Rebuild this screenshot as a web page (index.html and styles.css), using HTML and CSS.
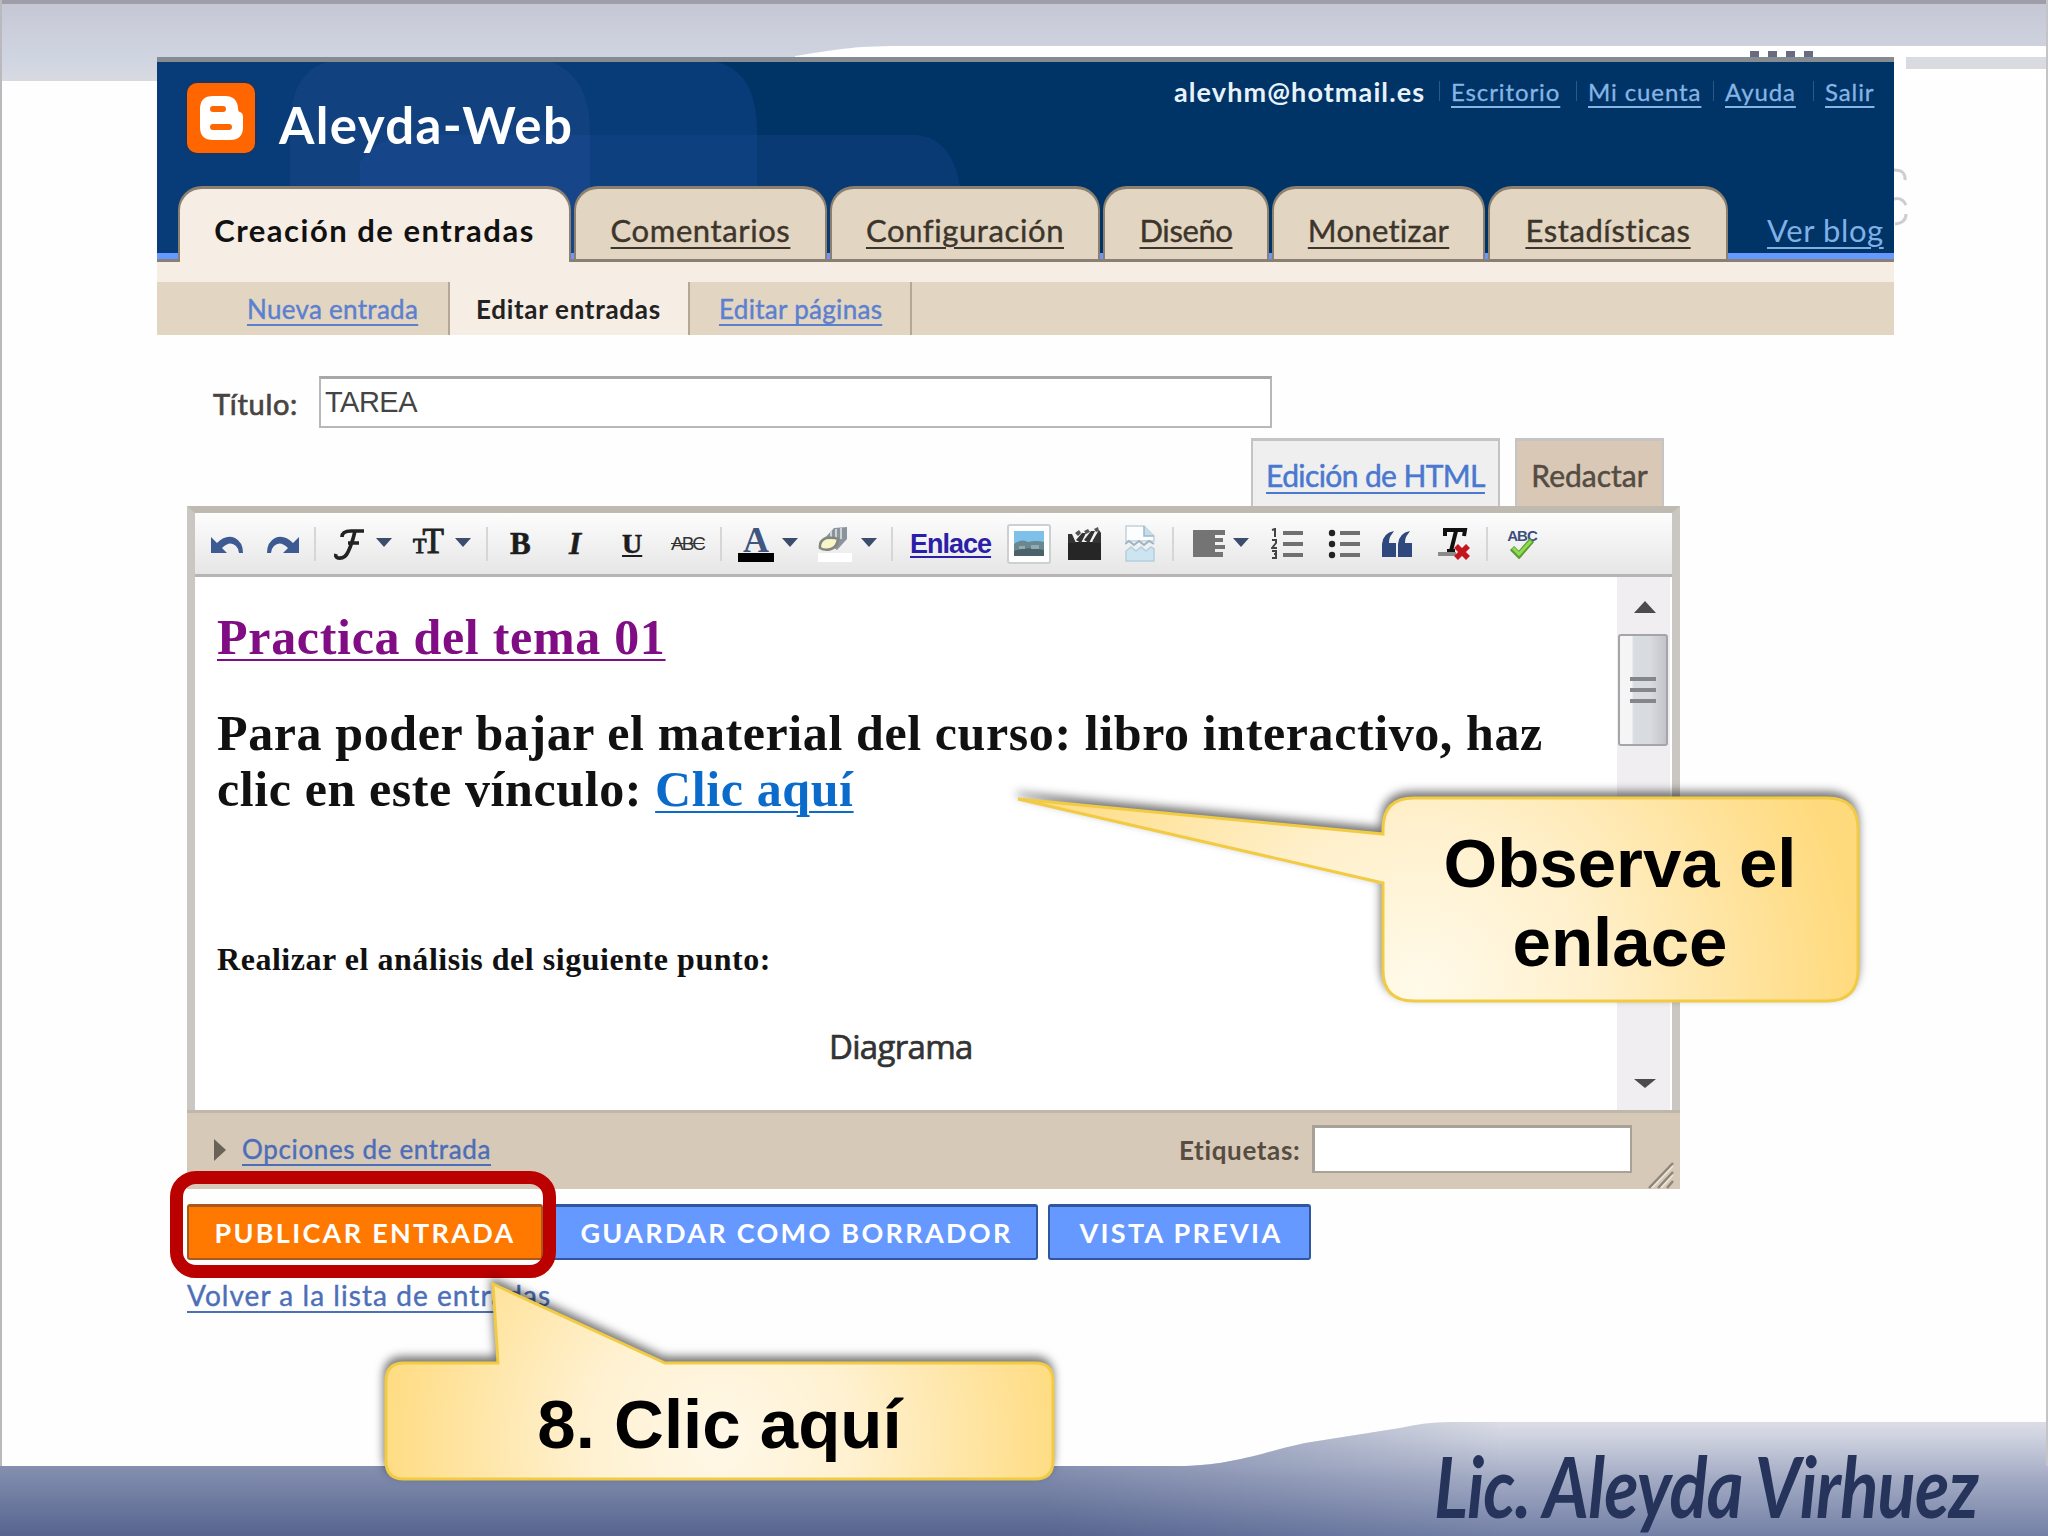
FILE: index.html
```html
<!DOCTYPE html>
<html lang="es">
<head>
  <meta charset="utf-8">
  <title>Aleyda-Web</title>
  <link rel="stylesheet" href="styles.css">
</head>
<body>
  <!-- slide background -->
  <svg class="backdrop" width="2048" height="1536" viewBox="0 0 2048 1536">
    <defs>
      <linearGradient id="sky" x1="0" y1="0" x2="0" y2="1">
        <stop offset="0" stop-color="#c6c6d3"/>
        <stop offset="0.75" stop-color="#d0d5e2"/>
        <stop offset="1" stop-color="#d8dae0"/>
      </linearGradient>
      <linearGradient id="sea" x1="0" y1="1466" x2="0" y2="1536" gradientUnits="userSpaceOnUse">
        <stop offset="0" stop-color="#8590b0"/>
        <stop offset="1" stop-color="#56648f"/>
      </linearGradient>
      <linearGradient id="wave" x1="0" y1="1420" x2="0" y2="1536" gradientUnits="userSpaceOnUse">
        <stop offset="0" stop-color="#dcdee6"/>
        <stop offset="0.15" stop-color="#ced2df"/>
        <stop offset="0.5" stop-color="#a3abc4"/>
        <stop offset="1" stop-color="#7380a6"/>
      </linearGradient>
      <linearGradient id="fade" x1="1050" y1="0" x2="1500" y2="0" gradientUnits="userSpaceOnUse">
        <stop offset="0" stop-color="#fff"/>
        <stop offset="1" stop-color="#000"/>
      </linearGradient>
      <mask id="seaMask"><rect y="1400" width="2048" height="136" fill="url(#fade)"/></mask>
    </defs>
    <rect width="2048" height="81" fill="url(#sky)"/>
    <path d="M795 56C835 50 850 46 900 46H2048V81H795Z" fill="#fff"/>
    <rect x="1906" y="57" width="142" height="12" fill="#d9dbe0"/>
    <g fill="#696b81">
      <rect x="1750" y="51" width="9" height="8"/><rect x="1768" y="51" width="9" height="8"/>
      <rect x="1786" y="51" width="9" height="8"/><rect x="1804" y="51" width="9" height="8"/>
    </g>
    <path d="M1894 170q12 0 11 10M1894 199q8-2 12 6M1906 214q0 9-11 10" fill="none" stroke="#cdcdd4" stroke-width="3"/>
    <path d="M0 1466H1185C1235 1464 1260 1453 1305 1443L1400 1428Q1425 1422 1450 1422H2048V1536H0Z" fill="url(#wave)"/>
    <path d="M0 1466H1185C1235 1464 1260 1453 1305 1443L1400 1428Q1425 1422 1450 1422H2048V1536H0Z" fill="url(#sea)" mask="url(#seaMask)"/>
    <rect width="2048" height="4" fill="#9f9da8"/>
    <rect width="2" height="1466" fill="#b9b9be"/>
    <rect x="2046" width="2" height="1466" fill="#c4c4c8"/>
  </svg>

  <div class="window">
    <header>
      <svg class="shapes" width="1737" height="194" viewBox="0 0 1737 194">
        <path d="M0 0H560Q600 10 600 70V194H0Z" fill="#083c78"/>
        <path d="M133 194V60Q135 10 170 0H395Q433 15 433 70V194Z" fill="#11427f"/>
        <path d="M203 194V100Q220 73 260 73H433V194Z" fill="#17458a"/>
        <path d="M433 73H760Q804 78 805 150V194H433Z" fill="#16478a" opacity=".4"/>
      </svg>
      <div class="top">
        <div class="logo">
          <svg width="44" height="46" viewBox="0 0 44 46">
            <path d="M14 1h12q12 0 13 12 0 4 2 4 3 1 3 5v10q0 13-13 13H14Q1 45 1 32V14Q1 1 14 1Z" fill="#fff"/>
            <path d="M14 14h10M14 32h16" stroke="#ff6600" stroke-width="6" stroke-linecap="round"/>
          </svg>
        </div>
        <h1>Aleyda-Web</h1>
        <div class="account">
          <b>alevhm@hotmail.es</b>
          <a class="a1">Escritorio</a>
          <a class="a2">Mi cuenta</a>
          <a class="a3">Ayuda</a>
          <a class="a4">Salir</a>
        </div>
      </div>
      <nav class="tabs">
        <div class="tab active">Creación de entradas</div>
        <div class="tab comments"><a>Comentarios</a></div>
        <div class="tab config"><a>Configuración</a></div>
        <div class="tab design"><a>Diseño</a></div>
        <div class="tab money"><a>Monetizar</a></div>
        <div class="tab stats"><a>Estadísticas</a></div>
        <a class="view">Ver blog</a>
      </nav>
    </header>
    <nav class="subnav">
      <div class="sub new"><a>Nueva entrada</a></div>
      <div class="sub current">Editar entradas</div>
      <div class="sub pages"><a>Editar páginas</a></div>
    </nav>

    <main>
      <div class="title-row">
        <label>Título:</label>
        <div class="title-input">TAREA</div>
      </div>
      <div class="modes">
        <div class="mode html"><a>Edición de HTML</a></div>
        <div class="mode compose">Redactar</div>
      </div>

      <div class="editor">
        <div class="toolbar">
          <svg width="32" height="18" viewBox="0 0 32 18"><path d="M0 2v16h16l-5-5q8-8 14-2 3 3 3 7h4Q32 7 24 3 15-1 6 8Z" fill="#3d5a93"/></svg>
          <svg width="32" height="18" viewBox="0 0 32 18"><path d="M32 2v16H16l5-5q-8-8-14-2-3 3-3 7H0Q0 7 8 3q9-4 18 5Z" fill="#3d5a93"/></svg>
          <i class="sep"></i>
          <svg width="32" height="32" viewBox="0 0 32 32"><path d="M30 3H17Q8 3 8 9M21 3Q18 16 14 24 11 31 4 30 1 29 2 26M14 15H25" fill="none" stroke="#222" stroke-width="3.6"/></svg>
          <i class="arrow"></i>
          <span class="size"><small>T</small>T</span>
          <i class="arrow"></i>
          <i class="sep"></i>
          <span class="glyph bold">B</span>
          <span class="glyph italic">I</span>
          <span class="glyph under">U</span>
          <span class="strike">ABC</span>
          <i class="sep"></i>
          <span class="color">A</span>
          <i class="arrow"></i>
          <svg width="34" height="36" viewBox="0 0 34 36"><rect y="27" width="34" height="9" fill="#fff"/><path d="M5 14 16 2 29 1V13L19 24Z" fill="#8b949c"/><path d="M13 5v12M18 3v13M23 2v11" stroke="#cdd3d6" stroke-width="2"/><path d="M2 22Q1 15 8 12q8-1 12 1-1 8-7 10-6 2-11-1Z" fill="#f6f6c8" stroke="#858580" stroke-width="2.5"/></svg>
          <i class="arrow"></i>
          <i class="sep"></i>
          <a class="link">Enlace</a>
          <svg width="44" height="40" viewBox="0 0 44 40"><rect x="1" y="1" width="42" height="38" rx="2" fill="#fff" stroke="#ccd0d3" stroke-width="2"/><rect x="7" y="7" width="30" height="25" fill="#7dc0ea"/><path d="M7 20q8-6 14-2 8-2 16 0v14H7Z" fill="#6b8790"/><path d="M7 27q14-5 30-1v6H7Z" fill="#4c626b"/><path d="M12 22h6v3h-6Zm12-1h8v4h-8Z" fill="#93abb0"/></svg>
          <svg width="34" height="34" viewBox="0 0 34 34"><path d="M1 15h33v18H1Z" fill="#262626"/><path d="M1 7h4l4 9H1ZM9 13l6-7h4l-5 10ZM17 13l7-9h4l-6 12ZM26 13l6-10 2 3v10h-9Z" fill="#333"/><path d="M8 6l4-3 2 3-3 3ZM17 4l4-2 2 3-4 2ZM27 2l4-2 1 4-3 1Z" fill="#555"/></svg>
          <svg width="30" height="37" viewBox="0 0 30 37"><path d="M1 1h18l10 10v5H1Z" fill="#fbfdff" stroke="#c4d1dc" stroke-width="1.5"/><path d="M19 1v10h10" fill="#c5dcec" stroke="#9fb9cd" stroke-width="1.5"/><path d="M1 26l5-4 5 4 5-4 5 4 5-4 3 2v12H1Z" fill="#cde5f0" stroke="#b4cfdd" stroke-width="1.5"/><path d="M0 19l4-3 5 4 5-4 5 4 5-4 5 3" fill="none" stroke="#9fb4c3" stroke-width="2"/></svg>
          <i class="sep"></i>
          <svg width="32" height="27" viewBox="0 0 32 27"><path d="M0 0H32V5H22V8H30V12H22V15H32V19H22V22H30V27H0Z" fill="#747474"/></svg>
          <i class="arrow"></i>
          <svg width="32" height="32" viewBox="0 0 32 32"><path d="M12 5H32M12 16H32M12 27H32" stroke="#707070" stroke-width="4"/><path d="M1 2l3-1v8M1 12h4v3l-4 5h5M1 23h4v3H3h2v4H1" fill="none" stroke="#444" stroke-width="2"/></svg>
          <svg width="32" height="32" viewBox="0 0 32 32"><path d="M12 5H32M12 16H32M12 27H32" stroke="#707070" stroke-width="4"/><circle cx="4" cy="5" r="3.2" fill="#222"/><circle cx="4" cy="16" r="3.2" fill="#222"/><circle cx="4" cy="27" r="3.2" fill="#222"/></svg>
          <svg width="30" height="27" viewBox="0 0 30 27"><path d="M0 27V14Q1 3 12 1L10 4Q7 7 7 13H14V27Z" fill="#2f487d"/><path d="M16 27V14Q17 3 28 1L26 4Q23 7 23 13H30V27Z" fill="#2f487d"/></svg>
          <svg width="32" height="32" viewBox="0 0 32 32"><path d="M7 8V2H27L26 8M18 3 13 23M9 23H17" fill="none" stroke="#111" stroke-width="4"/><path d="M0 26H18" stroke="#8b8b8b" stroke-width="4"/><path d="M18 18 30 30M30 18 18 30" stroke="#c4141c" stroke-width="5.5"/></svg>
          <i class="sep"></i>
          <span class="spell">ABC<svg width="24" height="20" viewBox="0 0 24 20"><path d="M2 9 9 16 22 1" fill="none" stroke="#5d9b38" stroke-width="6"/><path d="M3 9 9 15 21 2" fill="none" stroke="#8fdc4c" stroke-width="3"/></svg></span>
        </div>

        <div class="document">
          <div class="text">
            <p class="practice"><a>Practica del tema 01</a></p>
            <p class="material">Para poder bajar el material del curso: libro interactivo, haz<br>clic en este vínculo: <a>Clic aquí</a></p>
            <p class="task">Realizar el análisis del siguiente punto:</p>
            <p class="diagram">Diagrama</p>
          </div>
          <div class="scrollbar">
            <i class="up"></i>
            <div class="thumb"><i></i><i></i><i></i></div>
            <i class="down"></i>
          </div>
        </div>

        <div class="footer">
          <i class="more"></i>
          <a class="options">Opciones de entrada</a>
          <label>Etiquetas:</label>
          <div class="labels"></div>
          <svg class="grip" width="26" height="28" viewBox="0 0 26 28"><path d="M1 27 25 2M10 27 25 11M19 27 25 20" stroke="#8d867c" stroke-width="2.5"/><path d="M4 27 25 5M13 27 25 14" stroke="#efe6da" stroke-width="1.5"/></svg>
        </div>
      </div>

      <div class="actions">
        <div class="button publish">PUBLICAR ENTRADA</div>
        <div class="button draft">GUARDAR COMO BORRADOR</div>
        <div class="button preview">VISTA PREVIA</div>
      </div>
      <a class="back">Volver a la lista de entradas</a>
    </main>
  </div>

  <!-- annotations over the window -->
  <div class="highlight"></div>

  <div class="callout observe">
    <svg width="900" height="240" viewBox="1000 780 900 240">
      <defs>
        <radialGradient id="g1" cx="1420" cy="990" r="440" gradientUnits="userSpaceOnUse">
          <stop offset="0" stop-color="#fffaea"/>
          <stop offset="0.4" stop-color="#fff0cb"/>
          <stop offset="1" stop-color="#ffda7c"/>
        </radialGradient>
      </defs>
      <path d="M1018 799 1383 834V829Q1383 798 1414 798H1827Q1858 798 1858 829V970Q1858 1001 1827 1001H1414Q1383 1001 1383 970V883Z" fill="url(#g1)" stroke="#f2cb45" stroke-width="3"/>
    </svg>
    <p>Observa el<br>enlace</p>
  </div>

  <div class="callout click">
    <svg width="700" height="230" viewBox="370 1270 700 230">
      <defs>
        <radialGradient id="g2" cx="720" cy="1440" r="340" gradientUnits="userSpaceOnUse">
          <stop offset="0" stop-color="#fff8e8"/>
          <stop offset="0.4" stop-color="#fff1d0"/>
          <stop offset="1" stop-color="#ffdc82"/>
        </radialGradient>
      </defs>
      <path d="M493 1284 665 1363H1035Q1053 1363 1053 1381V1461Q1053 1479 1035 1479H404Q386 1479 386 1461V1381Q386 1363 404 1363H498Z" fill="url(#g2)" stroke="#f2cb45" stroke-width="3"/>
    </svg>
    <p>8. Clic aquí</p>
  </div>

  <div class="signature">Lic. Aleyda Virhuez</div>
</body>
</html>
```

FILE: styles.css
```css
* {
  box-sizing: border-box;
}

body {
  position: relative;
  width: 2048px;
  height: 1536px;
  margin: 0;
  overflow: hidden;
  background-color: #fefefe;
  font-family: Lato, "Liberation Sans", sans-serif;
}

h1, p {
  margin: 0;
}

a {
  text-decoration: underline;
  text-decoration-thickness: 2px;
  text-underline-offset: 5px;
}

.backdrop {
  position: absolute;
  top: 0;
  left: 0;
}

.window {
  position: relative;
  width: 1737px;
  margin-left: 157px;
  padding-top: 57px;
}

/* header */
header {
  position: relative;
  height: 205px;
  background-color: #003366;
  border-top: 5px solid #858b90;
  border-bottom: 3px solid #8a7f74;
}

.shapes {
  position: absolute;
  top: 0;
  left: 0;
}

.top {
  position: relative;
  display: flex;
  height: 124px;
  padding-left: 30px;
}

.logo {
  display: flex;
  align-items: center;
  justify-content: center;
  width: 68px;
  height: 70px;
  margin-top: 21px;
  background-color: #ff6600;
  border-radius: 10px;
  box-shadow: 0 0 3px #402a3a;
}

h1 {
  width: 300px;
  margin: 33px 0 0 24px;
  color: #fff;
  font-size: 51px;
  font-weight: 700;
  line-height: 60px;
  letter-spacing: 1.4px;
  white-space: nowrap;
}

.account {
  display: flex;
  margin-left: 595px;
  font-size: 24px;
  line-height: 60px;
  letter-spacing: 0.9px;
  white-space: nowrap;
  -webkit-text-stroke: 0.3px;
}

.account b {
  width: 267px;
  color: #e8f2fa;
  font-size: 27px;
  letter-spacing: 1.1px;
  -webkit-text-stroke: 0;
}

.account a {
  color: #86b4e4;
  padding-left: 10px;
}

.account a::before {
  content: "";
  display: inline-block;
  width: 1px;
  height: 20px;
  margin-right: 11px;
  margin-left: -12px;
  background-color: #2c5a88;
}

.a1 { width: 137px; }
.a2 { width: 137px; }
.a3 { width: 100px; }

.tabs {
  position: relative;
  display: flex;
  gap: 3px;
  height: 73px;
  padding-left: 21px;
  background: linear-gradient(#6699ff, #6699ff) bottom / 100% 6px no-repeat;
}

.tab {
  height: 73px;
  padding-top: 21px;
  background-color: #e2d5c1;
  border: 3px solid #8d806f;
  border-width: 3px 2px 0;
  border-radius: 24px 24px 0 0;
  color: #3d352c;
  font-size: 31px;
  line-height: 40px;
  letter-spacing: 0.6px;
  text-align: center;
  white-space: nowrap;
  -webkit-text-stroke: 0.4px;
}

.tab.active {
  width: 393px;
  height: 76px;
  background-color: #f6ede4;
  color: #111;
  font-weight: 700;
  letter-spacing: 1.5px;
  -webkit-text-stroke: 0;
}

.comments { width: 253px; }
.config { width: 270px; }
.tab.design { width: 166px; letter-spacing: -0.4px; }
.tab.money { width: 213px; letter-spacing: 0.3px; }
.stats { width: 240px; }

.view {
  margin-left: 36px;
  padding-top: 24px;
  height: 66px;
  color: #7fb0e6;
  font-size: 31px;
  line-height: 40px;
  letter-spacing: 0.6px;
  white-space: nowrap;
}

.subnav {
  display: flex;
  height: 73px;
  background: linear-gradient(#f6ede4 20px, #e2d5c1 20px);
  font-size: 26px;
  line-height: 53px;
  letter-spacing: 0.3px;
}

.sub {
  height: 53px;
  margin-top: 20px;
  padding-top: 1px;
  border-right: 2px solid #b5a795;
  white-space: nowrap;
}

.sub a {
  color: #5b80cf;
  -webkit-text-stroke: 0.4px;
}

.new {
  width: 293px;
  padding-left: 90px;
}

.current {
  width: 240px;
  padding-left: 26px;
  background-color: #f6ede4;
  color: #222;
  font-weight: 700;
  letter-spacing: 0.7px;
}

.pages {
  width: 222px;
  padding-left: 29px;
}

/* post form */
main {
  padding: 41px 0 0 30px;
}

.title-row {
  display: flex;
}

.title-row label {
  width: 132px;
  padding: 7px 0 0 26px;
  color: #4a4440;
  font-size: 29px;
  line-height: 42px;
  letter-spacing: 0.7px;
  -webkit-text-stroke: 0.7px;
}

.title-input {
  width: 953px;
  height: 52px;
  padding-left: 4px;
  background-color: #fff;
  border: 2px solid #b9b7b8;
  border-top: 3px solid #aaa7a9;
  color: #444;
  font: 29px/46px "Liberation Sans", sans-serif;
  letter-spacing: -0.5px;
}

.modes {
  display: flex;
  gap: 15px;
  height: 78px;
  padding: 10px 0 0 1064px;
  font-size: 30px;
  line-height: 68px;
  text-align: center;
}

.mode {
  border: 2px solid #c5c3c3;
  border-top-width: 3px;
  border-bottom: 0;
  white-space: nowrap;
  -webkit-text-stroke: 0.5px;
}

.html {
  width: 249px;
  background-color: #efefef;
  letter-spacing: -0.6px;
}

.html a {
  color: #4a78cf;
}

.compose {
  width: 149px;
  background-color: #d8c8b5;
  color: #544b43;
}

.editor {
  width: 1493px;
  height: 683px;
  border: 8px solid #cac6c1;
  border-top: 7px solid #bfbab0;
  border-bottom: 0;
}

.toolbar {
  display: grid;
  grid-template-columns: 56px 47px 20px 42px 37px 42px 31px 24px 56px 56px 49px 49px 18px 44px 36px 43px 30px 19px 97px 60px 58px 47px 21px 40px 38px 57px 54px 56px 48px 21px 40px;
  align-items: center;
  height: 64px;
  padding-left: 16px;
  background: linear-gradient(#fdfdfd, #e7e6e7);
  border-bottom: 3px solid #b7b4b5;
  font-family: "Liberation Serif", serif;
}

.sep {
  width: 2px;
  height: 34px;
  background-color: #d6d6d8;
}

.arrow {
  border: 8px solid transparent;
  border-top: 9px solid #3b4c6c;
  border-bottom: 0;
  width: 0;
  margin-top: -3px;
}

.size {
  display: flex;
  align-items: baseline;
  font-size: 35px;
  line-height: 36px;
  color: #222;
  -webkit-text-stroke: 1px #222;
}

.size small {
  margin-right: -4px;
  font-size: 22px;
}

.glyph {
  font-size: 31px;
  font-weight: 700;
  line-height: 36px;
  color: #1c1c1c;
  -webkit-text-stroke: 0.6px;
}

.italic {
  padding-left: 3px;
  font-style: italic;
}

.under {
  font-size: 28px;
  text-decoration: underline;
}

.strike {
  font: 19px/30px "Liberation Sans", sans-serif;
  letter-spacing: -2px;
  color: #333;
  text-decoration: line-through;
}

.color {
  width: 36px;
  height: 36px;
  border-bottom: 9px solid #000;
  color: #40557f;
  font-size: 36px;
  font-weight: 700;
  line-height: 29px;
  text-align: center;
}

.link {
  color: #2a20a8;
  font: 700 27px/34px "Liberation Sans", sans-serif;
  letter-spacing: -1px;
  text-underline-offset: 3px;
}

.spell {
  display: flex;
  flex-direction: column;
  align-items: center;
  width: 30px;
  color: #3c4f7d;
  font: 700 15px/14px "Liberation Sans", sans-serif;
  letter-spacing: -1px;
}

.spell svg {
  margin-top: -4px;
}

.document {
  display: flex;
  height: 533px;
  background-color: #fff;
  font-family: "Liberation Serif", serif;
  font-weight: 700;
}

.text {
  width: 1422px;
  padding: 32px 0 0 22px;
  color: #111;
  white-space: nowrap;
}

.practice {
  font-size: 50px;
  line-height: 56px;
  letter-spacing: 0.7px;
}

.practice a {
  color: #800d83;
}

.material {
  margin-top: 40px;
  font-size: 50px;
  line-height: 56px;
  letter-spacing: 0.6px;
}

.material a {
  color: #0b6bcb;
}

.task {
  margin-top: 122px;
  font-size: 32px;
  line-height: 40px;
  letter-spacing: 0.54px;
}

.diagram {
  margin-top: 48px;
  padding-left: 612px;
  color: #333;
  font: 33px/40px "Open Sans", sans-serif;
  letter-spacing: -0.7px;
  -webkit-text-stroke: 0.7px;
}

.scrollbar {
  display: flex;
  flex-direction: column;
  align-items: center;
  width: 53px;
  padding: 24px 2px 22px 0;
  background-color: #f0eef0;
}

.up, .down {
  margin-left: 4px;
  border: 11px solid transparent;
}

.up {
  border-top: 0;
  border-bottom: 12px solid #4b4b4b;
}

.down {
  margin-top: auto;
  border-top: 9px solid #4b4b4b;
  border-bottom: 0;
}

.thumb {
  display: flex;
  flex-direction: column;
  align-items: center;
  justify-content: center;
  gap: 7px;
  width: 50px;
  height: 112px;
  margin-top: 21px;
  background: linear-gradient(90deg, #f5f5f6 25%, #d7dde0 30%, #d9dbe0 65%, #c3c4ca);
  border: 2px solid #a5a4a8;
  border-radius: 3px;
}

.thumb i {
  width: 26px;
  height: 4px;
  background-color: #85868c;
}

.footer {
  display: flex;
  height: 79px;
  margin: 0 -8px;
  padding-left: 27px;
  background-color: #d7c9b7;
  border-top: 3px solid #bfb6ac;
}

.more {
  height: 0;
  margin-top: 26px;
  border: 11px solid transparent;
  border-left: 12px solid #6b6257;
  border-right: 0;
}

.options {
  width: 953px;
  padding-left: 16px;
  color: #4c6db8;
  font-size: 26px;
  line-height: 72px;
  letter-spacing: 0.65px;
  -webkit-text-stroke: 0.4px;
}

.footer label {
  width: 133px;
  color: #574c41;
  font-size: 26px;
  font-weight: 700;
  line-height: 74px;
  letter-spacing: 0.65px;
  white-space: nowrap;
}

.labels {
  width: 320px;
  height: 48px;
  margin-top: 12px;
  background-color: #fff;
  border: 3px solid #aaa196;
  border-width: 3px 2px 2px 3px;
}

.grip {
  align-self: flex-end;
  margin-left: 16px;
}

/* bottom buttons */
.actions {
  display: flex;
  margin-top: 15px;
}

.button {
  height: 56px;
  background-color: #6699ff;
  border: 2px solid #2f569f;
  border-top-width: 3px;
  border-radius: 3px;
  color: #fff;
  font-size: 27px;
  font-weight: 700;
  line-height: 51px;
  letter-spacing: 2.3px;
  text-align: center;
  white-space: nowrap;
}

.publish {
  width: 356px;
  background-color: #ff7800;
  border-color: #a85a1c;
}

.draft {
  width: 488px;
  margin-left: 7px;
  padding-left: 5px;
}

.preview {
  width: 263px;
  margin-left: 10px;
  padding-left: 3px;
}

.back {
  display: block;
  margin-top: 16px;
  color: #4c6fb8;
  font-size: 28px;
  line-height: 38px;
  letter-spacing: 1.05px;
  white-space: nowrap;
  -webkit-text-stroke: 0.4px;
}

/* annotations */
.highlight {
  position: absolute;
  top: 1171px;
  left: 170px;
  width: 386px;
  height: 107px;
  border: 13px solid #bb0000;
  border-radius: 26px;
}

.callout {
  position: absolute;
  color: #000;
  font: 700 69px/79px "Liberation Sans", sans-serif;
  text-align: center;
}

.callout svg {
  display: block;
  filter: drop-shadow(-1px -5px 5px rgba(0, 0, 0, 0.55));
}

.callout p {
  position: absolute;
}

.observe {
  top: 780px;
  left: 1000px;
}

.observe p {
  top: 44px;
  left: 383px;
  width: 474px;
}

.click {
  top: 1270px;
  left: 370px;
}

.click p {
  top: 115px;
  left: 16px;
  width: 667px;
}

.signature {
  position: absolute;
  top: 1438px;
  left: 1434px;
  color: #26335a;
  font-size: 84px;
  font-style: italic;
  font-weight: 700;
  line-height: 96px;
  letter-spacing: -1px;
  white-space: nowrap;
  transform: scaleX(0.84);
  transform-origin: left;
}
```
